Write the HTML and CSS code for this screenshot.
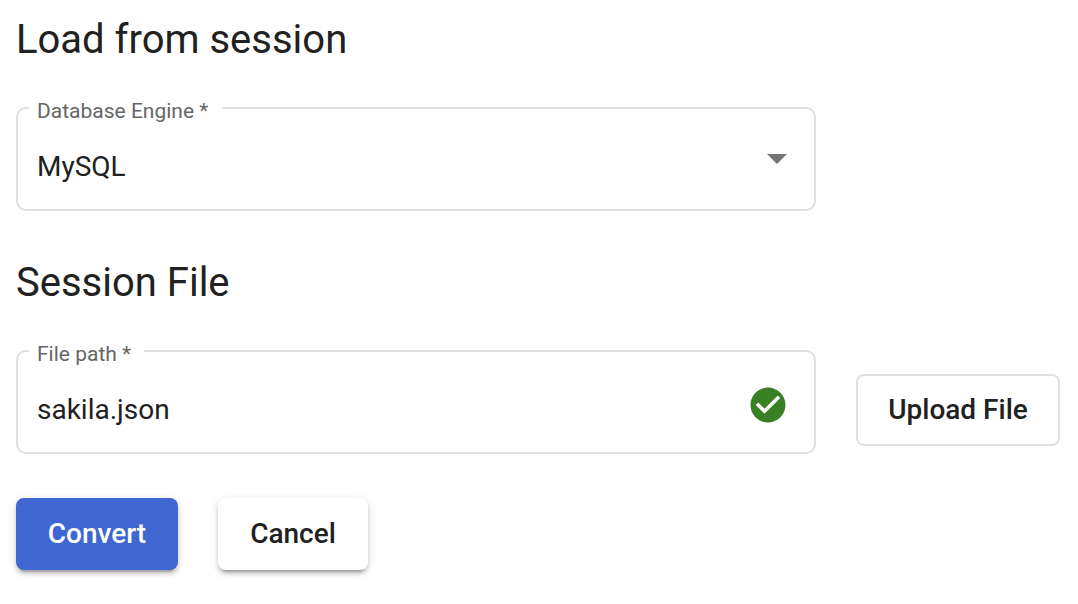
FILE: index.html
```html
<!DOCTYPE html>
<html lang="en">
<head>
<meta charset="utf-8">
<title>Load from session</title>
<link rel="stylesheet" href="styles.css">
</head>
<body>
<form class="session-form">
  <h3 class="heading">Load from session</h3>
  <fieldset class="field engine">
    <legend class="label">Database Engine *</legend>
    <div class="control">
      <span class="value">MySQL</span>
      <svg class="arrow" width="20" height="10" viewBox="0 0 20 10"><path d="M0 0h20L10 10z"/></svg>
    </div>
  </fieldset>
  <h3 class="heading">Session File</h3>
  <div class="file-row">
    <fieldset class="field">
      <legend class="label">File path *</legend>
      <div class="control">
        <span class="value">sakila.json</span>
        <svg class="check" width="42" height="42" viewBox="0 0 24 24"><path d="M12 2C6.480 2 2 6.480 2 12s4.480 10 10 10 10-4.480 10-10S17.520 2 12 2zm-2 15l-5-5 1.410-1.410L10 14.170l7.590-7.590L19 8l-9 9z"/></svg>
      </div>
    </fieldset>
    <button class="button upload" type="button">Upload File</button>
  </div>
  <div class="actions">
    <button class="button convert" type="button">Convert</button>
    <button class="button cancel" type="button">Cancel</button>
  </div>
</form>
</body>
</html>
```
FILE: styles.css
```css
* { box-sizing: border-box; }
body {
  margin: 0;
  background: #fff;
  color: #212121;
  font-family: Roboto, sans-serif;
}
.session-form { min-height: 604px; padding: 7px 16px 0; }
.heading {
  margin: 0;
  height: 64px;
  font-size: 40px;
  font-weight: 400;
  line-height: 66px;
}
.field {
  width: 800px;
  height: 113px;
  margin: 27px 0 0;
  padding: 0 20px 0 11px;
  border: 2px solid #e0e0e0;
  border-radius: 10px;
  min-width: 0;
}
.engine { margin-bottom: 39px; }
.label {
  height: 20px;
  padding: 0 13px 0 8px;
  color: #666;
  font-size: 21px;
  line-height: 26px;
}
.engine .label { padding-right: 14px; }
.control {
  display: flex;
  justify-content: space-between;
  height: 80px;
  padding: 0 7px 0 8px;
}
.value { padding-top: 33px; font-size: 28px; line-height: 32px; }
.arrow { margin-top: 36px; fill: #757575; }
.check { margin: 23px -2px 0 0; fill: #388023; }
.file-row { display: flex; gap: 40px; }
.button {
  height: 72px;
  padding: 0;
  border: 0;
  border-radius: 8px;
  background: #fff;
  color: #212121;
  font: 500 28px/72px Roboto, sans-serif;
}
.upload {
  width: 204px;
  margin-top: 60px;
  border: 2px solid #e0e0e0;
  line-height: 68px;
}
.actions { display: flex; gap: 40px; margin-top: 44px; }
.convert, .cancel {
  box-shadow: 0 6px 2px -4px rgba(0,0,0,.2), 0 4px 4px rgba(0,0,0,.14), 0 2px 10px rgba(0,0,0,.12);
}
.convert { width: 162px; background: #3f66d1; color: #fff; }
.cancel { width: 150px; }
```
